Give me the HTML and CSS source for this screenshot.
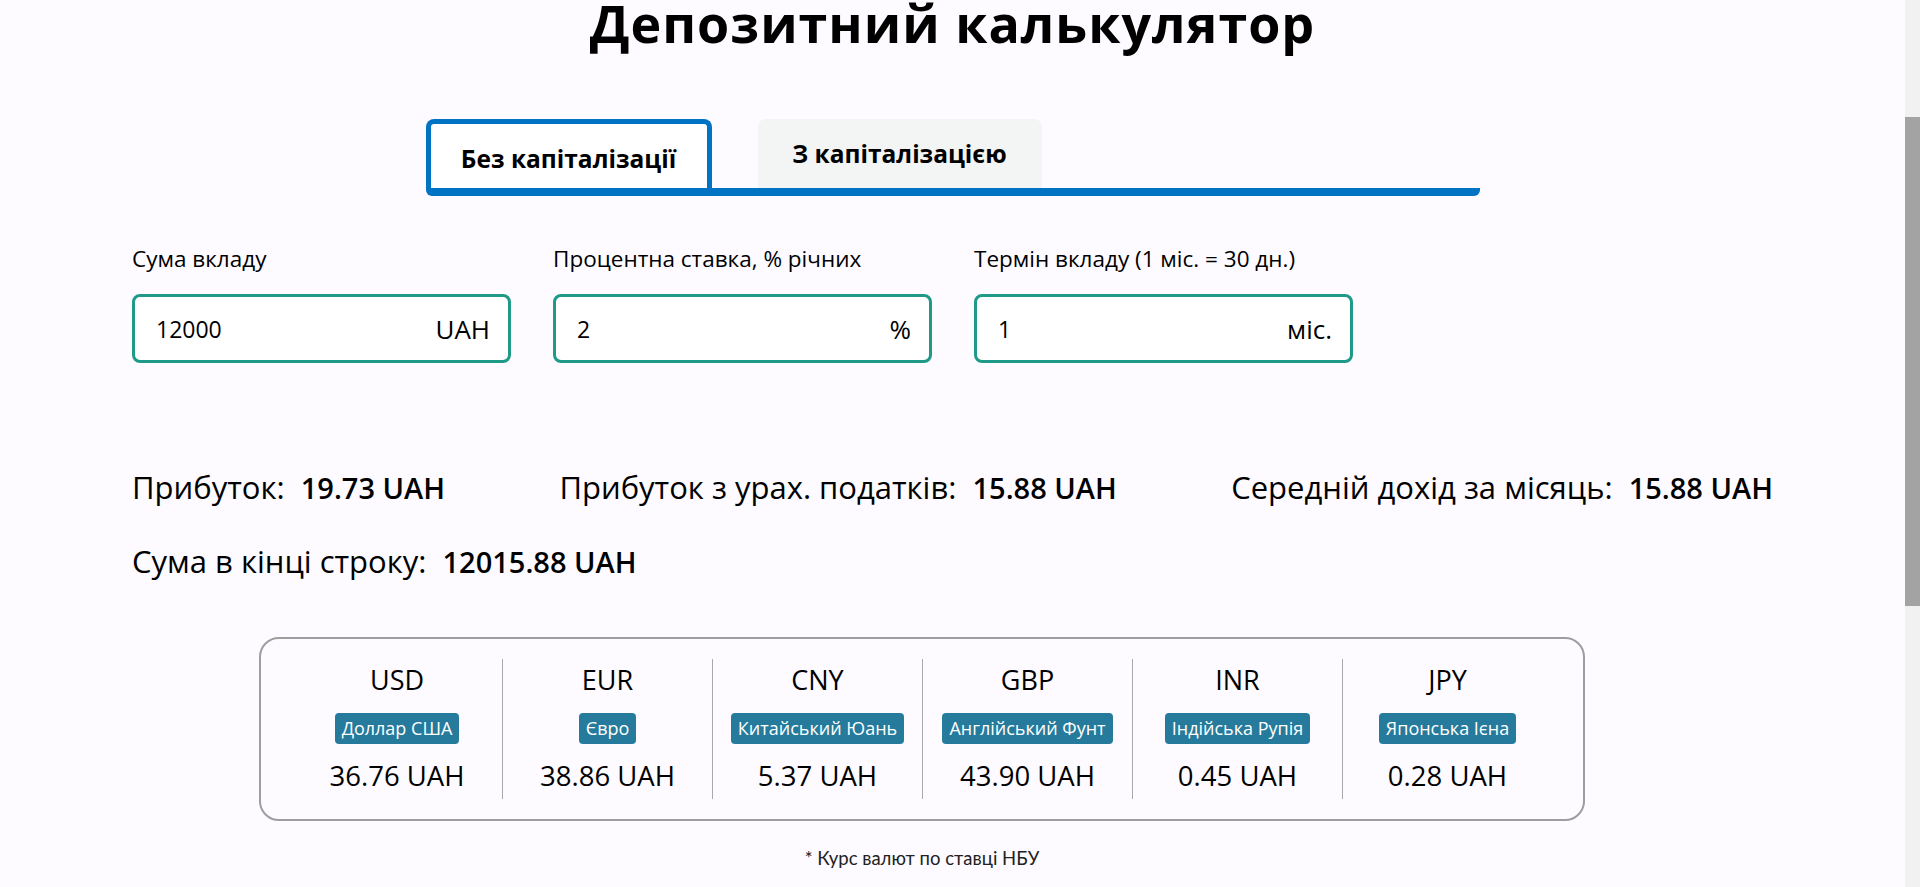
FILE: index.html
```html
<!DOCTYPE html>
<html lang="uk">
<head>
<meta charset="utf-8">
<title>Депозитний калькулятор</title>
<link rel="stylesheet" href="styles.css">
</head>
<body>
<header class="top-spacer"></header>
<main class="page">
  <h1 class="title">Депозитний калькулятор</h1>
  <nav class="tabs">
    <button class="tab tab-active">Без капіталізації</button>
    <button class="tab">З капіталізацією</button>
  </nav>
  <section class="form">
    <div class="field">
      <label class="field-label">Сума вкладу</label>
      <div class="input-box"><span class="input-value">12000</span><span class="input-unit">UAH</span></div>
    </div>
    <div class="field">
      <label class="field-label">Процентна ставка, % річних</label>
      <div class="input-box"><span class="input-value">2</span><span class="input-unit">%</span></div>
    </div>
    <div class="field">
      <label class="field-label">Термін вкладу (1 міс. = 30 дн.)</label>
      <div class="input-box"><span class="input-value">1</span><span class="input-unit">міс.</span></div>
    </div>
  </section>
  <section class="results">
    <div class="result">Прибуток:&nbsp; <b>19.73 UAH</b></div>
    <div class="result">Прибуток з урах. податків:&nbsp; <b>15.88 UAH</b></div>
    <div class="result">Середній дохід за місяць:&nbsp; <b>15.88 UAH</b></div>
    <div class="result">Сума в кінці строку:&nbsp; <b>12015.88 UAH</b></div>
  </section>
  <section class="rates">
    <div class="rate"><div class="rate-code">USD</div><div class="rate-name">Доллар США</div><div class="rate-value">36.76 UAH</div></div>
    <div class="rate"><div class="rate-code">EUR</div><div class="rate-name">Євро</div><div class="rate-value">38.86 UAH</div></div>
    <div class="rate"><div class="rate-code">CNY</div><div class="rate-name">Китайський Юань</div><div class="rate-value">5.37 UAH</div></div>
    <div class="rate"><div class="rate-code">GBP</div><div class="rate-name">Англійський Фунт</div><div class="rate-value">43.90 UAH</div></div>
    <div class="rate"><div class="rate-code">INR</div><div class="rate-name">Індійська Рупія</div><div class="rate-value">0.45 UAH</div></div>
    <div class="rate"><div class="rate-code">JPY</div><div class="rate-name">Японська Ієна</div><div class="rate-value">0.28 UAH</div></div>
  </section>
  <p class="note">* Курс валют по ставці НБУ</p>
</main>
<aside class="scrollbar" aria-hidden="true"><div class="scrollbar-thumb"></div></aside>
<script src="script.js"></script>
</body>
</html>
```

FILE: styles.css
```css
html {
  overflow-y: scroll;
}
body {
  margin: 0;
  padding-right: 15px;
  min-height: 1609px;
  background: #fdfbff;
  color: #000;
  font-family: "Open Sans", "Noto Sans", sans-serif;
}
.top-spacer {
  height: 205px;
}
.page {
  padding: 0 132px;
}
.title {
  margin: 0;
  text-align: center;
  font-size: 52px;
  line-height: 60px;
  font-weight: 700;
  letter-spacing: 1px;
}
.tabs {
  display: flex;
  gap: 46px;
  width: 1054px;
  margin: 66px auto 0;
  box-sizing: border-box;
  border-bottom: 8px solid #0074c2;
  border-radius: 0 0 6px 6px;
}
.tab {
  height: 69px;
  padding: 0;
  border: none;
  border-radius: 8px 8px 0 0;
  background: #f3f4f4;
  font-family: inherit;
  font-size: 24.5px;
  font-weight: 700;
  color: #000;
  width: 284px;
}
.tab-active {
  width: 286px;
  background: #fff;
  border: 5px solid #0074c2;
  border-bottom: none;
  padding-top: 4px;
}
.form {
  display: flex;
  gap: 42px;
  margin-top: 50px;
}
.field {
  width: 379px;
}
.field-label {
  display: block;
  font-size: 22.5px;
  line-height: 26px;
}
.input-box {
  margin-top: 22px;
  height: 69px;
  box-sizing: border-box;
  border: 3px solid #1f9a89;
  border-radius: 8px;
  background: #fff;
  display: flex;
  align-items: center;
  justify-content: space-between;
  padding: 0 18px 0 21px;
}
.input-value {
  font-size: 23px;
}
.input-unit {
  font-size: 26px;
  font-weight: 500;
}
.results {
  display: flex;
  flex-wrap: wrap;
  justify-content: space-between;
  row-gap: 37px;
  margin-top: 106px;
}
.result {
  font-size: 31px;
  line-height: 36px;
}
.result b {
  font-weight: 600;
  font-size: 29px;
}
.rates {
  display: flex;
  width: 1326px;
  box-sizing: border-box;
  margin: 57px 0 0 127px;
  padding: 20px 31px;
  border: 2px solid #9e9e9e;
  border-radius: 20px;
}
.rate {
  width: 210px;
  height: 140px;
  display: flex;
  flex-direction: column;
  align-items: center;
  box-sizing: border-box;
}
.rate + .rate {
  border-left: 1px solid #a9a9a9;
}
.rate-code {
  margin-top: 5px;
  font-size: 27px;
  line-height: 32px;
}
.rate-name {
  margin-top: 17px;
  background: #267b9c;
  color: #fff;
  font-size: 18px;
  line-height: 31px;
  padding: 0 7px;
  border-radius: 4px;
}
.rate-value {
  margin-top: 16px;
  font-size: 27.5px;
  line-height: 32px;
}
.note {
  width: 1326px;
  margin: 25px 0 0 127px;
  text-align: center;
  font-family: "Lato", sans-serif;
  font-size: 18.5px;
  line-height: 24px;
  color: #222;
}
.scrollbar {
  position: fixed;
  top: 0;
  right: 0;
  width: 15px;
  height: 100vh;
  background: #f1f1f1;
}
.scrollbar-thumb {
  margin-top: 117px;
  height: 489px;
  background: #a3a3a3;
}
```

FILE: script.js
```js
window.scrollTo(0, 212);
```
